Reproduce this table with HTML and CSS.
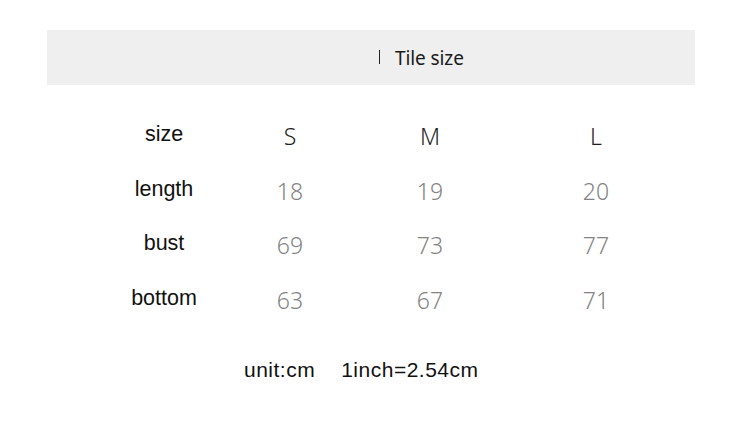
FILE: index.html
```html
<!DOCTYPE html>
<html>
<head>
<meta charset="utf-8">
<link rel="stylesheet" href="styles.css">
</head>
<body>
<div class="page">
  <div class="banner"><span class="bar"></span><span class="title">Tile size</span></div>
  <div class="table">
    <div class="lbl">size</div><div class="hd">S</div><div class="hd">M</div><div class="hd">L</div>
    <div class="lbl">length</div><div class="num">18</div><div class="num">19</div><div class="num">20</div>
    <div class="lbl">bust</div><div class="num">69</div><div class="num">73</div><div class="num">77</div>
    <div class="lbl">bottom</div><div class="num">63</div><div class="num">67</div><div class="num">71</div>
  </div>
  <div class="foot"><span>unit:cm</span><span>1inch=2.54cm</span></div>
</div>
</body>
</html>
```
FILE: styles.css
```css
html, body { margin: 0; padding: 0; background: #fff; }
.page { width: 750px; height: 442px; padding-top: 30px; box-sizing: border-box; }
.banner {
  margin: 0 55px 0 47px;
  height: 55px;
  background: #efefef;
  display: flex;
  align-items: center;
  padding-left: 332px;
  box-sizing: border-box;
}
.bar { width: 1px; height: 14px; background: #222; margin-right: 15px; margin-top: -1px; }
.title { font-family: "Noto Sans", sans-serif; font-size: 19px; color: #1a1a1a; letter-spacing: -0.1px; }
.table {
  margin-top: 24px;
  margin-left: 104px;
  display: grid;
  grid-template-columns: 120px 132px 148px 184px;
  grid-auto-rows: 54.5px;
  align-items: center;
  text-align: center;
}
.lbl { font-family: "Liberation Sans", Arial, sans-serif; font-size: 21.5px; color: #111; margin-top: -3px; }
.hd { font-family: "Noto Sans", sans-serif; font-weight: 300; font-size: 23px; color: #1e1e1e; }
.num { font-family: "Noto Sans", sans-serif; font-weight: 300; font-size: 23px; color: #838383; }
.foot {
  margin-top: 31px;
  padding-left: 244px;
  display: flex;
  gap: 26px;
  font-family: "Liberation Sans", Arial, sans-serif;
  font-size: 21px;
  letter-spacing: 0.5px;
  color: #111;
}
```
